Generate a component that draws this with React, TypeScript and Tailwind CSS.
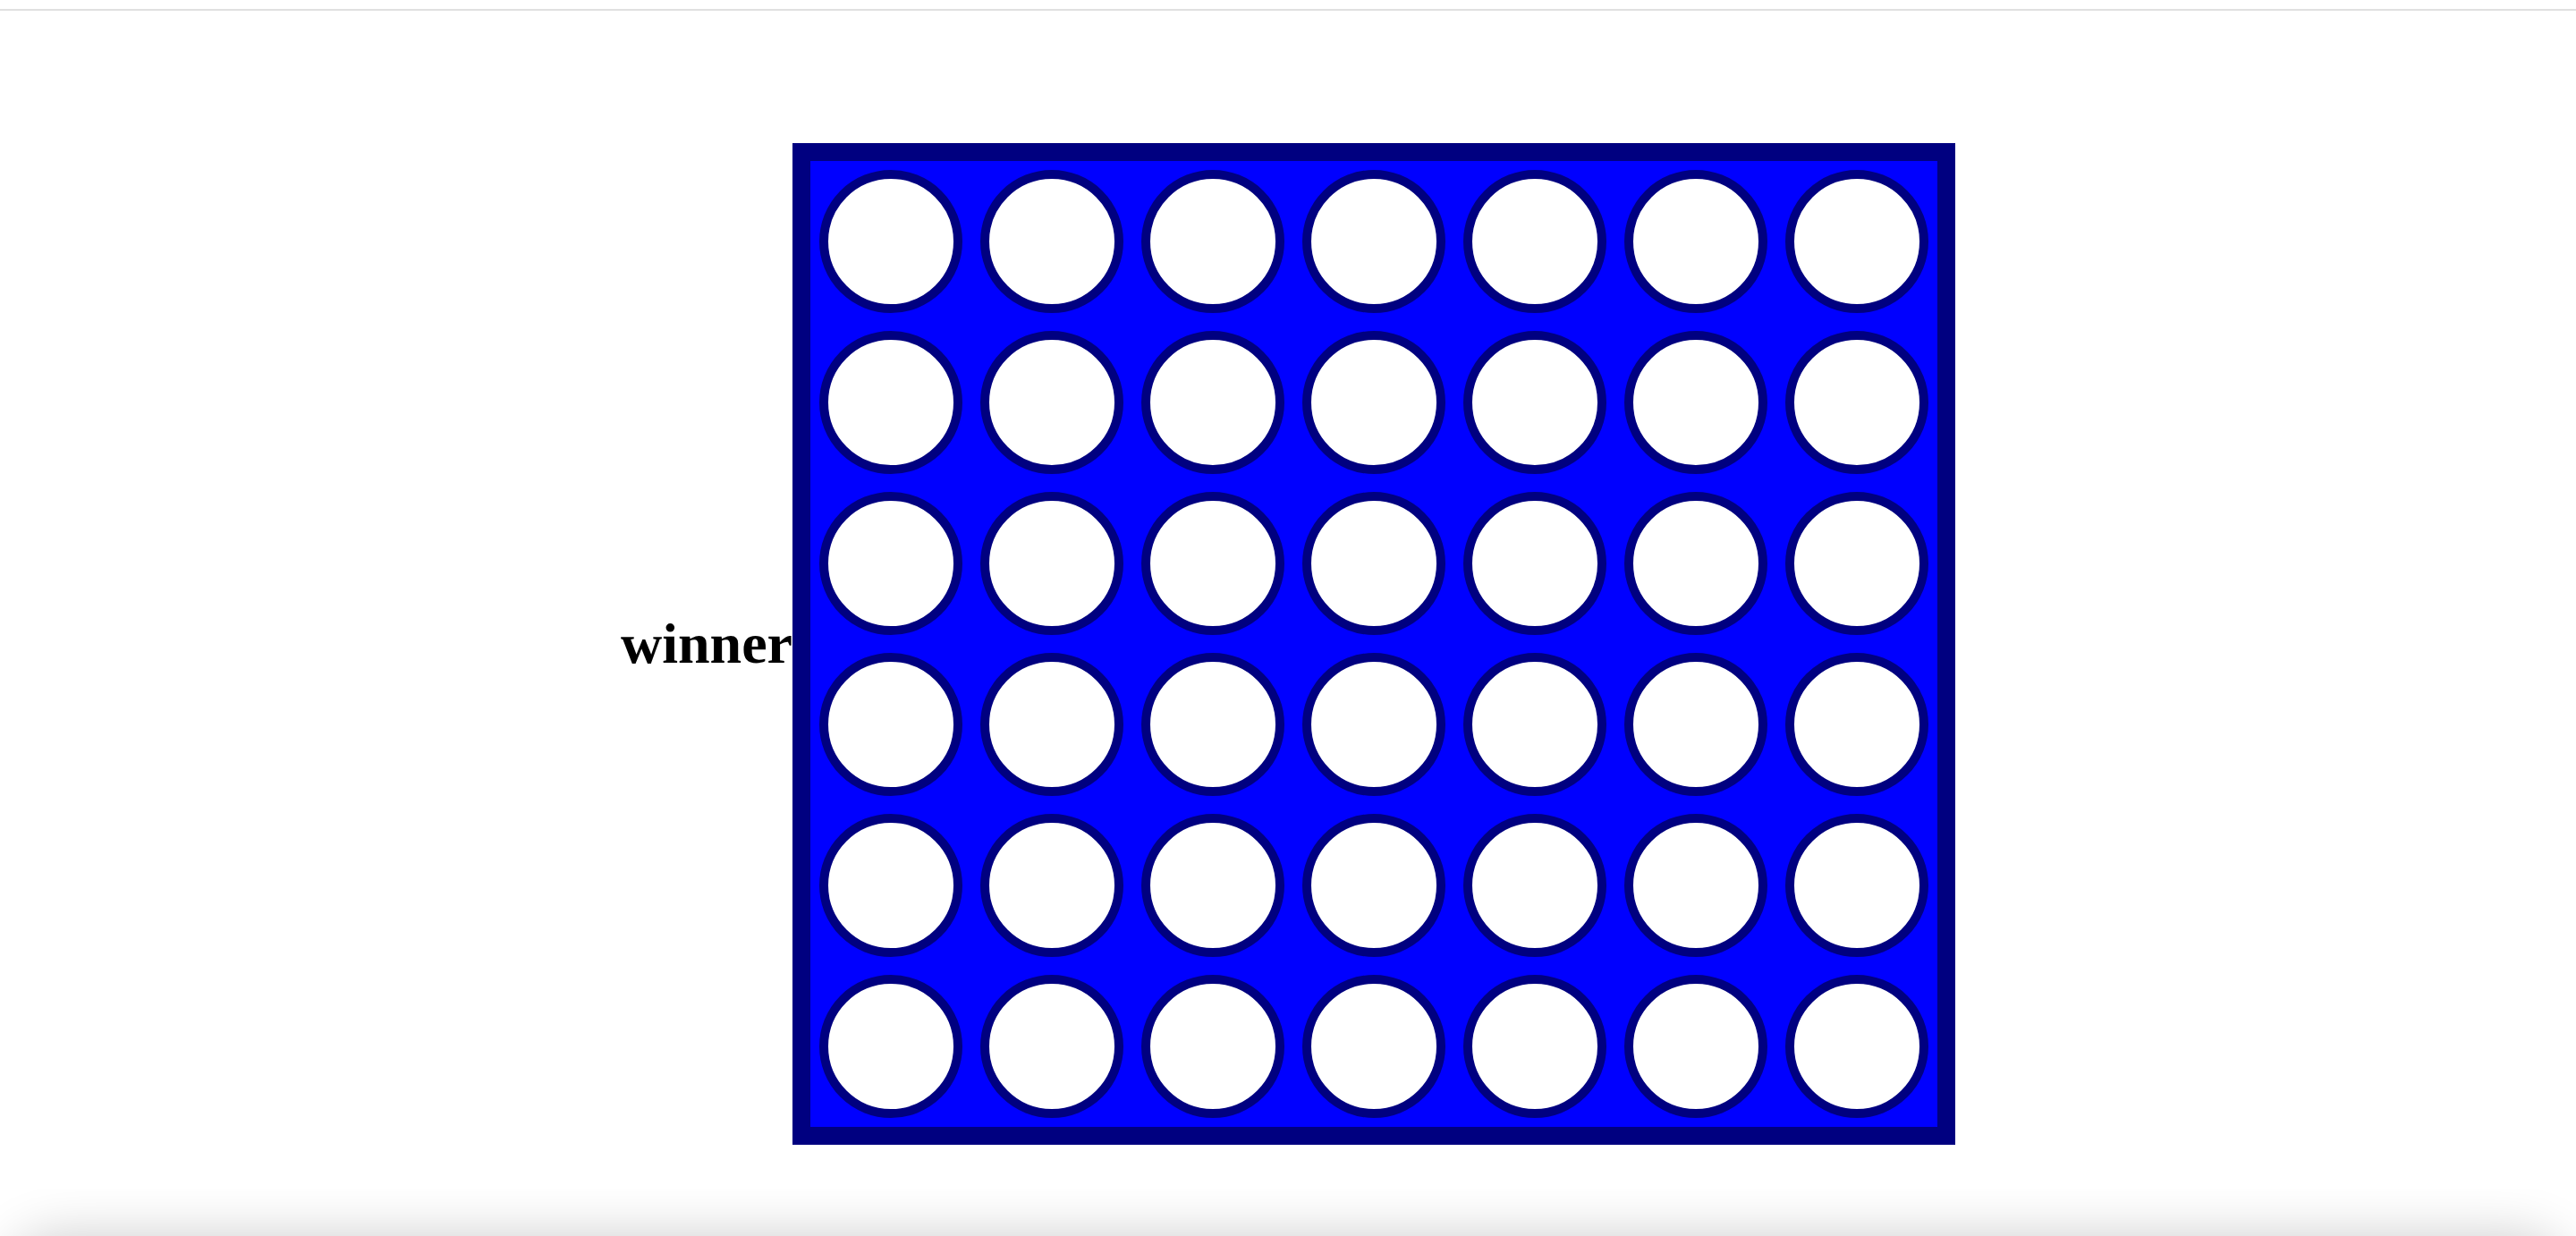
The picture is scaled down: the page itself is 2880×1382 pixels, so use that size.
const ROWS = 6;
const COLS = 7;

function Slot() {
  return (
    <div className="flex h-[180px] w-[180px] items-center justify-center">
      <div className="h-[160px] w-[160px] rounded-full border-[10px] border-[#000080] bg-white" />
    </div>
  );
}

export default function App() {
  const cells = Array.from({ length: ROWS * COLS }, (_, i) => i);

  return (
    <div className="flex h-[1382px] flex-col overflow-hidden bg-white">
      {/* top rule */}
      <div className="mt-[10px] h-[2px] w-full bg-[#e0e0e0]" />

      {/* game area */}
      <div className="flex justify-center items-center pt-[148px]">
        <h2 className="text-[64px] font-bold text-black [font-family:'Liberation_Serif',serif]">
          winner
        </h2>
        <div className="border-[20px] border-[#000080] bg-[#0000ff]">
          <div className="grid grid-cols-7">
            {cells.map((c) => (
              <Slot key={c} />
            ))}
          </div>
        </div>
      </div>

      {/* shadow of whatever sits below the fold */}
      <div className="mt-auto h-[52px] overflow-hidden">
        <div className="mx-[6px] mt-[52px] h-[200px] rounded-[60px] bg-white shadow-[0_0_60px_rgba(0,0,0,0.2)]" />
      </div>
    </div>
  );
}
